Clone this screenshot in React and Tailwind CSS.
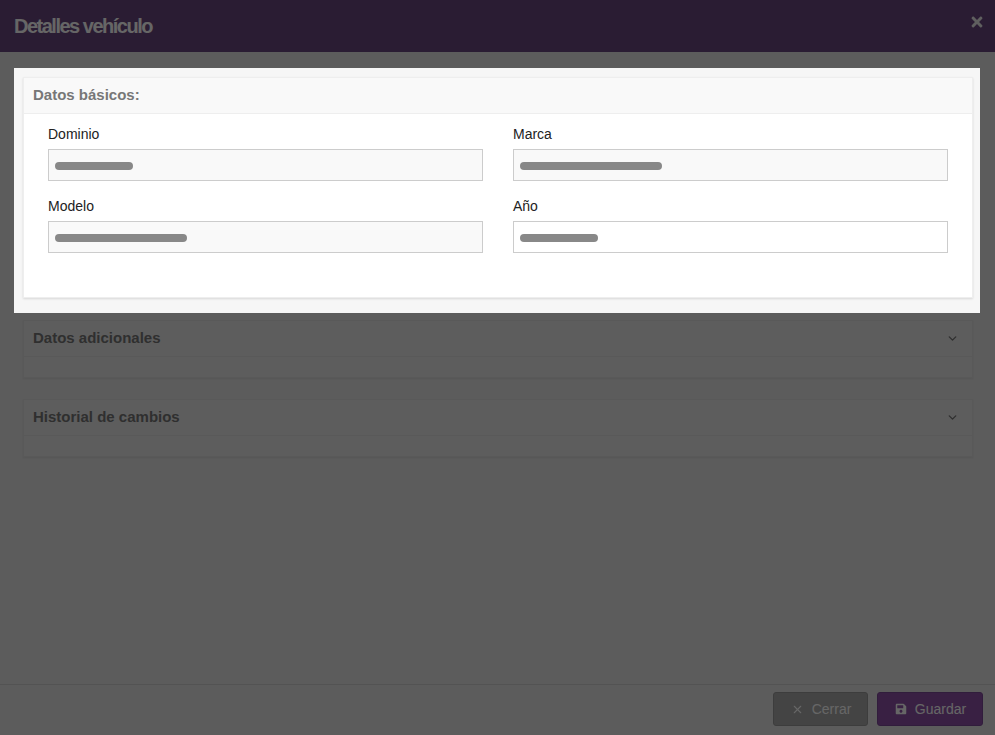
import React from 'react';
import { ChevronDown, X } from 'lucide-react';
import { FaSave, FaTimes } from 'react-icons/fa';

const Field = ({ label, barWidth, readOnly }) => (
    <div>
        <label className="block text-sm leading-[20px] mb-[5px] text-[#222]">{label}</label>
        <div className={`h-8 border border-[#ccc] flex items-center px-[6px] ${readOnly ? "bg-[#f9f9f9]" : "bg-white"}`}>
            <div className="h-2 mt-[1px] rounded-full bg-[#888] blur-[0.4px]" style={{ width: barWidth }} />
        </div>
    </div>
);

const CollapsedPanel = ({ title }) => (
    <div className="border border-[#dedede] bg-[#e8e8e8] shadow-[0_1px_2px_rgba(0,0,0,0.08)]">
        <div className="h-9 border-b border-[#dedede] flex items-center justify-between pl-[9px] pr-[13px]">
            <h4 className="text-[15px] font-bold text-[#777]">{title}</h4>
            <ChevronDown size={13} strokeWidth={2.5} className="text-[#777]" />
        </div>
        <div className="h-[20px]" />
    </div>
);

export default function App() {
    return (
        <div className="relative h-[735px] overflow-hidden flex flex-col bg-[#e6e6e6] font-['Liberation_Sans',Arial,sans-serif]">
            {/* Modal header */}
            <div className="h-[52px] shrink-0 bg-[#69467f] flex items-center justify-between pl-[14px] pr-[10px]">
                <h3 className="text-xl font-bold tracking-[-1.5px] text-white">Detalles vehículo</h3>
                <FaTimes size={16} className="text-[#eee] -mt-[9px]" />
            </div>

            {/* Modal body */}
            <div className="flex-1 pl-[23px] pr-[22px] pt-[25px]">
                {/* Highlighted step sits above the overlay */}
                <div className="relative z-20 -ml-[9px] -mr-[7px] -mt-[9px] mb-[7px] pl-[9px] pr-[7px] pt-[9px] pb-[15px] bg-[#f6f6f6]">
                    <div className="border border-[#eee] bg-white shadow-[0_1px_2px_rgba(0,0,0,0.12)]">
                        <div className="h-9 bg-[#f9f9f9] border-b border-[#eee] flex items-center px-[9px]">
                            <h4 className="text-[15px] font-bold text-[#777]">Datos básicos:</h4>
                        </div>
                        <div className="grid grid-cols-2 gap-x-[30px] gap-y-[15px] px-[24px] pt-[10px] pb-[44px]">
                            <Field label="Dominio" barWidth={78} readOnly />
                            <Field label="Marca" barWidth={142} readOnly />
                            <Field label="Modelo" barWidth={132} readOnly />
                            <Field label="Año" barWidth={78} />
                        </div>
                    </div>
                </div>

                <div className="flex flex-col gap-[21px]">
                    <CollapsedPanel title="Datos adicionales" />
                    <CollapsedPanel title="Historial de cambios" />
                </div>
            </div>

            {/* Modal footer */}
            <div className="h-[51px] shrink-0 border-t border-[#cfcfcf] flex items-start justify-end gap-[9px] pt-[7px] pr-3">
                <button className="h-[34px] w-[95px] rounded-[3px] border border-[#999] bg-[#aaa] text-white text-sm flex items-center justify-center gap-2 pl-[1px]">
                    <X size={13} strokeWidth={2} />
                    Cerrar
                </button>
                <button className="h-[34px] w-[106px] rounded-[3px] border border-[#7c4a96] bg-[#8f52a8] text-white text-sm flex items-center justify-center gap-2 pl-[1px]">
                    <FaSave size={12} />
                    Guardar
                </button>
            </div>

            {/* Dim overlay */}
            <div className="absolute inset-0 z-10 bg-black/60" />
        </div>
    );
}
